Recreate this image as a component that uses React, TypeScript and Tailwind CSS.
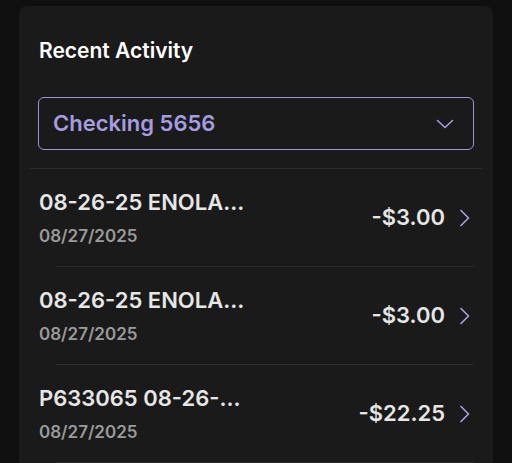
type Txn = { title: string; date: string; amount: string };

const txns: Txn[] = [
    { title: '08-26-25 ENOLA...', date: '08/27/2025', amount: '-$3.00' },
    { title: '08-26-25 ENOLA...', date: '08/27/2025', amount: '-$3.00' },
    { title: 'P633065 08-26-...', date: '08/27/2025', amount: '-$22.25' },
];

const ChevRight = () => (
    <svg width="12" height="18" viewBox="0 0 12 18" fill="none" className="ml-[14px]">
        <path d="M2 1.5 L9.5 9 L2 16.5" stroke="#a59de0" strokeWidth="1.7" strokeLinecap="round" strokeLinejoin="round" />
    </svg>
);

const ChevDown = () => (
    <svg width="18" height="10" viewBox="0 0 18 10" fill="none">
        <path d="M1.5 1.5 L9 8.5 L16.5 1.5" stroke="#a59de0" strokeWidth="1.6" strokeLinecap="round" strokeLinejoin="round" />
    </svg>
);

const TxnRow = ({ txn }: { txn: Txn }) => (
    <div className="flex flex-col">
        <div className="flex items-center h-[97px] pl-[20px] pr-[22px]">
            <div className="flex flex-col flex-1 gap-[11px] -mt-[1px]">
                <span className="text-[22px] leading-[26px] font-semibold text-[#e6e6e6]">{txn.title}</span>
                <span className="text-[17px] leading-[20px] font-semibold text-[#9a9a9a]">{txn.date}</span>
            </div>
            <span className="text-[22px] font-semibold text-[#e6e6e6]">{txn.amount}</span>
            <ChevRight />
        </div>
        <div className="h-px bg-[#2b2b2b] ml-[37px] mr-[19px]" />
    </div>
);

export default function App() {
    return (
        <div className="w-[512px] h-[463px] bg-[#0f0f0f] overflow-hidden" style={{ fontFamily: 'Inter, "Liberation Sans", sans-serif' }}>
            <div className="ml-[19px] mt-[6px] w-[474px] h-[500px] bg-[#1a1a1a] rounded-[8px]">
                <div className="px-[20px] pt-[32px]">
                    <h2 className="text-[21px] leading-[26px] font-semibold text-white">Recent Activity</h2>
                </div>
                <div className="px-[19px] mt-[33px]">
                    <div className="flex items-center justify-between h-[53px] border-[1.5px] border-[#9c95d9] rounded-[6px] pl-[14px] pr-[19px]">
                        <span className="text-[22px] font-semibold text-[#a59de0]">Checking 5656</span>
                        <ChevDown />
                    </div>
                </div>
                <div className="h-px bg-[#2b2b2b] mx-[11px] mt-[18px]" />
                {txns.map((t, i) => (
                    <TxnRow key={i} txn={t} />
                ))}
            </div>
        </div>
    );
}
